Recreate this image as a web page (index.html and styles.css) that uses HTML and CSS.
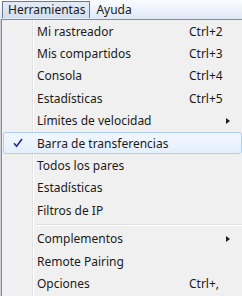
FILE: index.html
```html
<!DOCTYPE html>
<html>
<head>
    <meta name="viewport" content="width=device-width, initial-scale=1.0">
    <title>Herramientas</title>
    <link rel="stylesheet" href="styles.css">
</head>
<body>

    <div class="menubar">
        <span class="top-item open">Herramientas</span>
        <span class="top-item">Ayuda</span>
    </div>

    <div class="dropdown">
        <div class="item"><span class="label">Mi rastreador</span><span class="key">Ctrl+2</span></div>
        <div class="item"><span class="label">Mis compartidos</span><span class="key">Ctrl+3</span></div>
        <div class="item"><span class="label">Consola</span><span class="key">Ctrl+4</span></div>
        <div class="item"><span class="label">Estadísticas</span><span class="key">Ctrl+5</span></div>
        <div class="item"><span class="label">Límites de velocidad</span><span class="key"></span><span class="arrow"></span></div>
        <div class="item checked">
            <svg class="check" width="10" height="10" viewBox="0 0 10 10">
                <path d="M1 5.2 L3.6 8.2 L9 1" fill="none" stroke="#1c2f8f" stroke-width="1.6"/>
            </svg>
            <span class="label">Barra de transferencias</span>
        </div>
        <div class="item"><span class="label">Todos los pares</span></div>
        <div class="item"><span class="label">Estadísticas</span></div>
        <div class="item"><span class="label">Filtros de IP</span></div>
        <div class="separator"></div>
        <div class="item"><span class="label">Complementos</span><span class="key"></span><span class="arrow"></span></div>
        <div class="item"><span class="label">Remote Pairing</span></div>
        <div class="item"><span class="label">Opciones</span><span class="key">Ctrl+,</span></div>
    </div>

</body>
</html>
```

FILE: styles.css
```css
* {
    margin: 0;
    padding: 0;
    box-sizing: border-box;
}
body {
    width: 242px;
    height: 296px;
    overflow: hidden;
    background: #c9ced6;
    font-family: "Noto Sans", "Open Sans", sans-serif;
    font-size: 12px;
    color: #1b1b1b;
}
.menubar {
    display: flex;
    align-items: center;
    height: 19px;
    padding-left: 2px;
    background: linear-gradient(#fbfcfe, #dfe8f5);
}
.top-item {
    padding: 0 4px 0 5px;
    height: 17px;
    line-height: 16px;
    border: 1px solid transparent;
}
.top-item.open {
    border-color: #6d7b8f;
    background: linear-gradient(#e3ebf6, #d3deec);
    border-bottom: none;
}
.dropdown {
    width: 244px;
    margin-left: 1px;
    padding: 0 3px 1px 1px;
    border: 1px solid #8c8c8c;
    border-right: none;
    border-bottom-color: #6e6e6e;
    background-color: #f0f0f0;
    background-image: linear-gradient(to right, transparent 30px, #e2e3e3 30px, #e2e3e3 31px, #ffffff 31px, #ffffff 32px, transparent 32px);
}
.item {
    position: relative;
    display: flex;
    align-items: center;
    height: 22.4px;
    padding-left: 33px;
    border: 1px solid transparent;
    border-radius: 3px;
}
.label {
    width: 152px;
    white-space: nowrap;
}
.key {
    width: 37px;
}
.arrow {
    width: 0;
    height: 0;
    border-top: 3.5px solid transparent;
    border-bottom: 3.5px solid transparent;
    border-left: 4px solid #1b1b1b;
}
.checked {
    border-color: #aecff7;
    background: linear-gradient(#f2f7fe, #e4effc);
}
.check {
    position: absolute;
    left: 9px;
    top: 5px;
}
.separator {
    height: 2px;
    margin: 2px 0 2px 33px;
    border-top: 1px solid #e0e0e0;
    background: #ffffff;
}
```
